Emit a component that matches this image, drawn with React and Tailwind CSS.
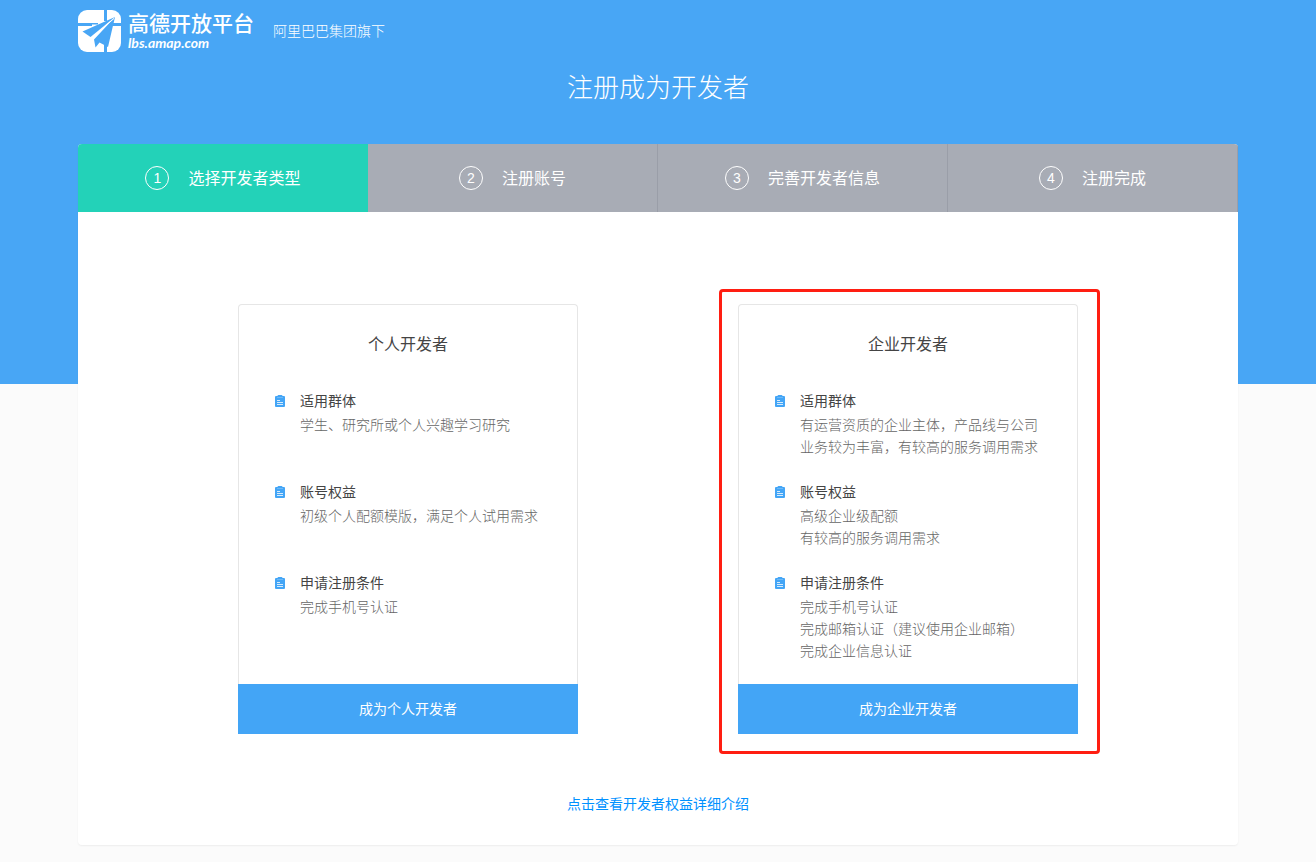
import React from "react";
import clsx from "clsx";

const steps = ["选择开发者类型", "注册账号", "完善开发者信息", "注册完成"];

const plans = [
  {
    name: "个人开发者",
    action: "成为个人开发者",
    items: [
      { title: "适用群体", lines: ["学生、研究所或个人兴趣学习研究"] },
      { title: "账号权益", lines: ["初级个人配额模版，满足个人试用需求"] },
      { title: "申请注册条件", lines: ["完成手机号认证"] },
    ],
  },
  {
    name: "企业开发者",
    action: "成为企业开发者",
    highlighted: true,
    items: [
      {
        title: "适用群体",
        lines: ["有运营资质的企业主体，产品线与公司", "业务较为丰富，有较高的服务调用需求"],
      },
      { title: "账号权益", lines: ["高级企业级配额", "有较高的服务调用需求"] },
      {
        title: "申请注册条件",
        lines: ["完成手机号认证", "完成邮箱认证（建议使用企业邮箱）", "完成企业信息认证"],
      },
    ],
  },
];

const Logo = () => (
  <svg className="w-[43px] h-[42px] shrink-0" viewBox="0 0 43 42" aria-hidden="true">
    <rect width="43" height="42" rx="9" fill="#fff" />
    <path d="M0 14.5h14M34 14.5h9M27.500 0v11M27.500 33v9" stroke="#48a6f5" strokeWidth="3" />
    <path d="M14 13h6v1.500h-6z" fill="#48a6f5" />
    <path d="M37 7 4.500 21.500 12.500 27z" fill="#48a6f5" />
    <path d="M37 7 16 29.500 17.500 37.500 21.500 32.500 30 37z" fill="#48a6f5" />
    <path d="M36 8.500 13.500 28" stroke="#fff" strokeWidth="1" />
  </svg>
);

const ClipboardIcon = () => (
  <svg className="w-[10px] h-3 mt-2 shrink-0" viewBox="0 0 10 12" aria-hidden="true">
    <path d="M1 1h1.500Q2.500 0 3.500 0h3Q7.500 0 7.500 1H9q1 0 1 1v9q0 1-1 1H1q-1 0-1-1V2q0-1 1-1z" fill="#43a5f6" />
    <path d="M2 2.500h6" stroke="#6db9f8" strokeWidth="1" />
    <path d="M2 5.500h3M2 7.500h6M2 9.500h6" stroke="#d6ecfe" strokeWidth="1" />
  </svg>
);

const PlanCard = ({ plan }) => (
  <section className="relative w-[340px] flex flex-col">
    <div className="grow min-h-[380px] border border-b-0 border-[#e6e6e6] rounded-t px-9 pt-[26px] pb-5">
      <h2 className="text-base leading-6 text-center text-[#444] mb-8">{plan.name}</h2>
      <ul>
        {plan.items.map((item) => (
          <li key={item.title} className="flex gap-[15px] min-h-[91px]">
            <ClipboardIcon />
            <div className="text-sm whitespace-nowrap">
              <h3 className="leading-[26px] text-[#444]">{item.title}</h3>
              {item.lines.map((line) => (
                <p key={line} className="leading-[22px] font-light text-[#666]">
                  {line}
                </p>
              ))}
            </div>
          </li>
        ))}
      </ul>
    </div>
    <button type="button" className="h-[50px] pb-0.5 bg-[#43a5f6] text-sm text-white cursor-pointer">
      {plan.action}
    </button>
    {plan.highlighted && (
      <div className="absolute -top-[15px] -bottom-5 -left-[19px] -right-[22px] border-3 border-[#ff1e12] rounded pointer-events-none" />
    )}
  </section>
);

const App = () => {
  return (
    <div className="min-h-screen pb-4 bg-[linear-gradient(#48a6f5_384px,#fbfbfb_384px)] font-['Noto_Sans_CJK_SC',sans-serif]">
      <div className="max-w-[1160px] mx-auto">
        <header className="flex items-center pt-[10px] text-white">
          <a href="#home" className="flex items-center gap-[7px]">
            <Logo />
            <span className="flex flex-col">
              <span className="text-[21px] leading-6 font-medium">高德开放平台</span>
              <span className="font-['Lato',sans-serif] text-[14px] leading-[18px] font-bold italic">
                lbs.amap.com
              </span>
            </span>
          </a>
          <span className="ml-[19px] pb-0.5 text-sm font-light">阿里巴巴集团旗下</span>
        </header>

        <h1 className="mt-[14px] mb-[38px] text-[26px] leading-10 font-light text-center text-white">
          注册成为开发者
        </h1>

        <main className="bg-white rounded overflow-hidden shadow-[0_1px_2px_rgba(0,0,0,0.06)]">
          <ol className="grid grid-cols-4 h-[68px] text-white">
            {steps.map((step, index) => (
              <li
                key={step}
                className={clsx(
                  "flex items-center justify-center gap-[19px]",
                  index === 0 ? "bg-[#23d2b8]" : "bg-[#a8acb5] border-r border-[#9a9ea8]"
                )}
              >
                <span className="size-6 flex items-center justify-center rounded-full border border-white font-['Liberation_Sans',sans-serif] text-sm">
                  {index + 1}
                </span>
                <span className="pb-0.5 text-base">{step}</span>
              </li>
            ))}
          </ol>

          <div className="flex flex-wrap justify-center gap-x-40 gap-y-12 pt-[92px]">
            {plans.map((plan) => (
              <PlanCard key={plan.name} plan={plan} />
            ))}
          </div>

          <p className="pt-[59px] pb-8 text-center text-sm">
            <a href="#benefits" className="text-[#0091ff]">
              点击查看开发者权益详细介绍
            </a>
          </p>
        </main>
      </div>
    </div>
  );
};

export default App;
